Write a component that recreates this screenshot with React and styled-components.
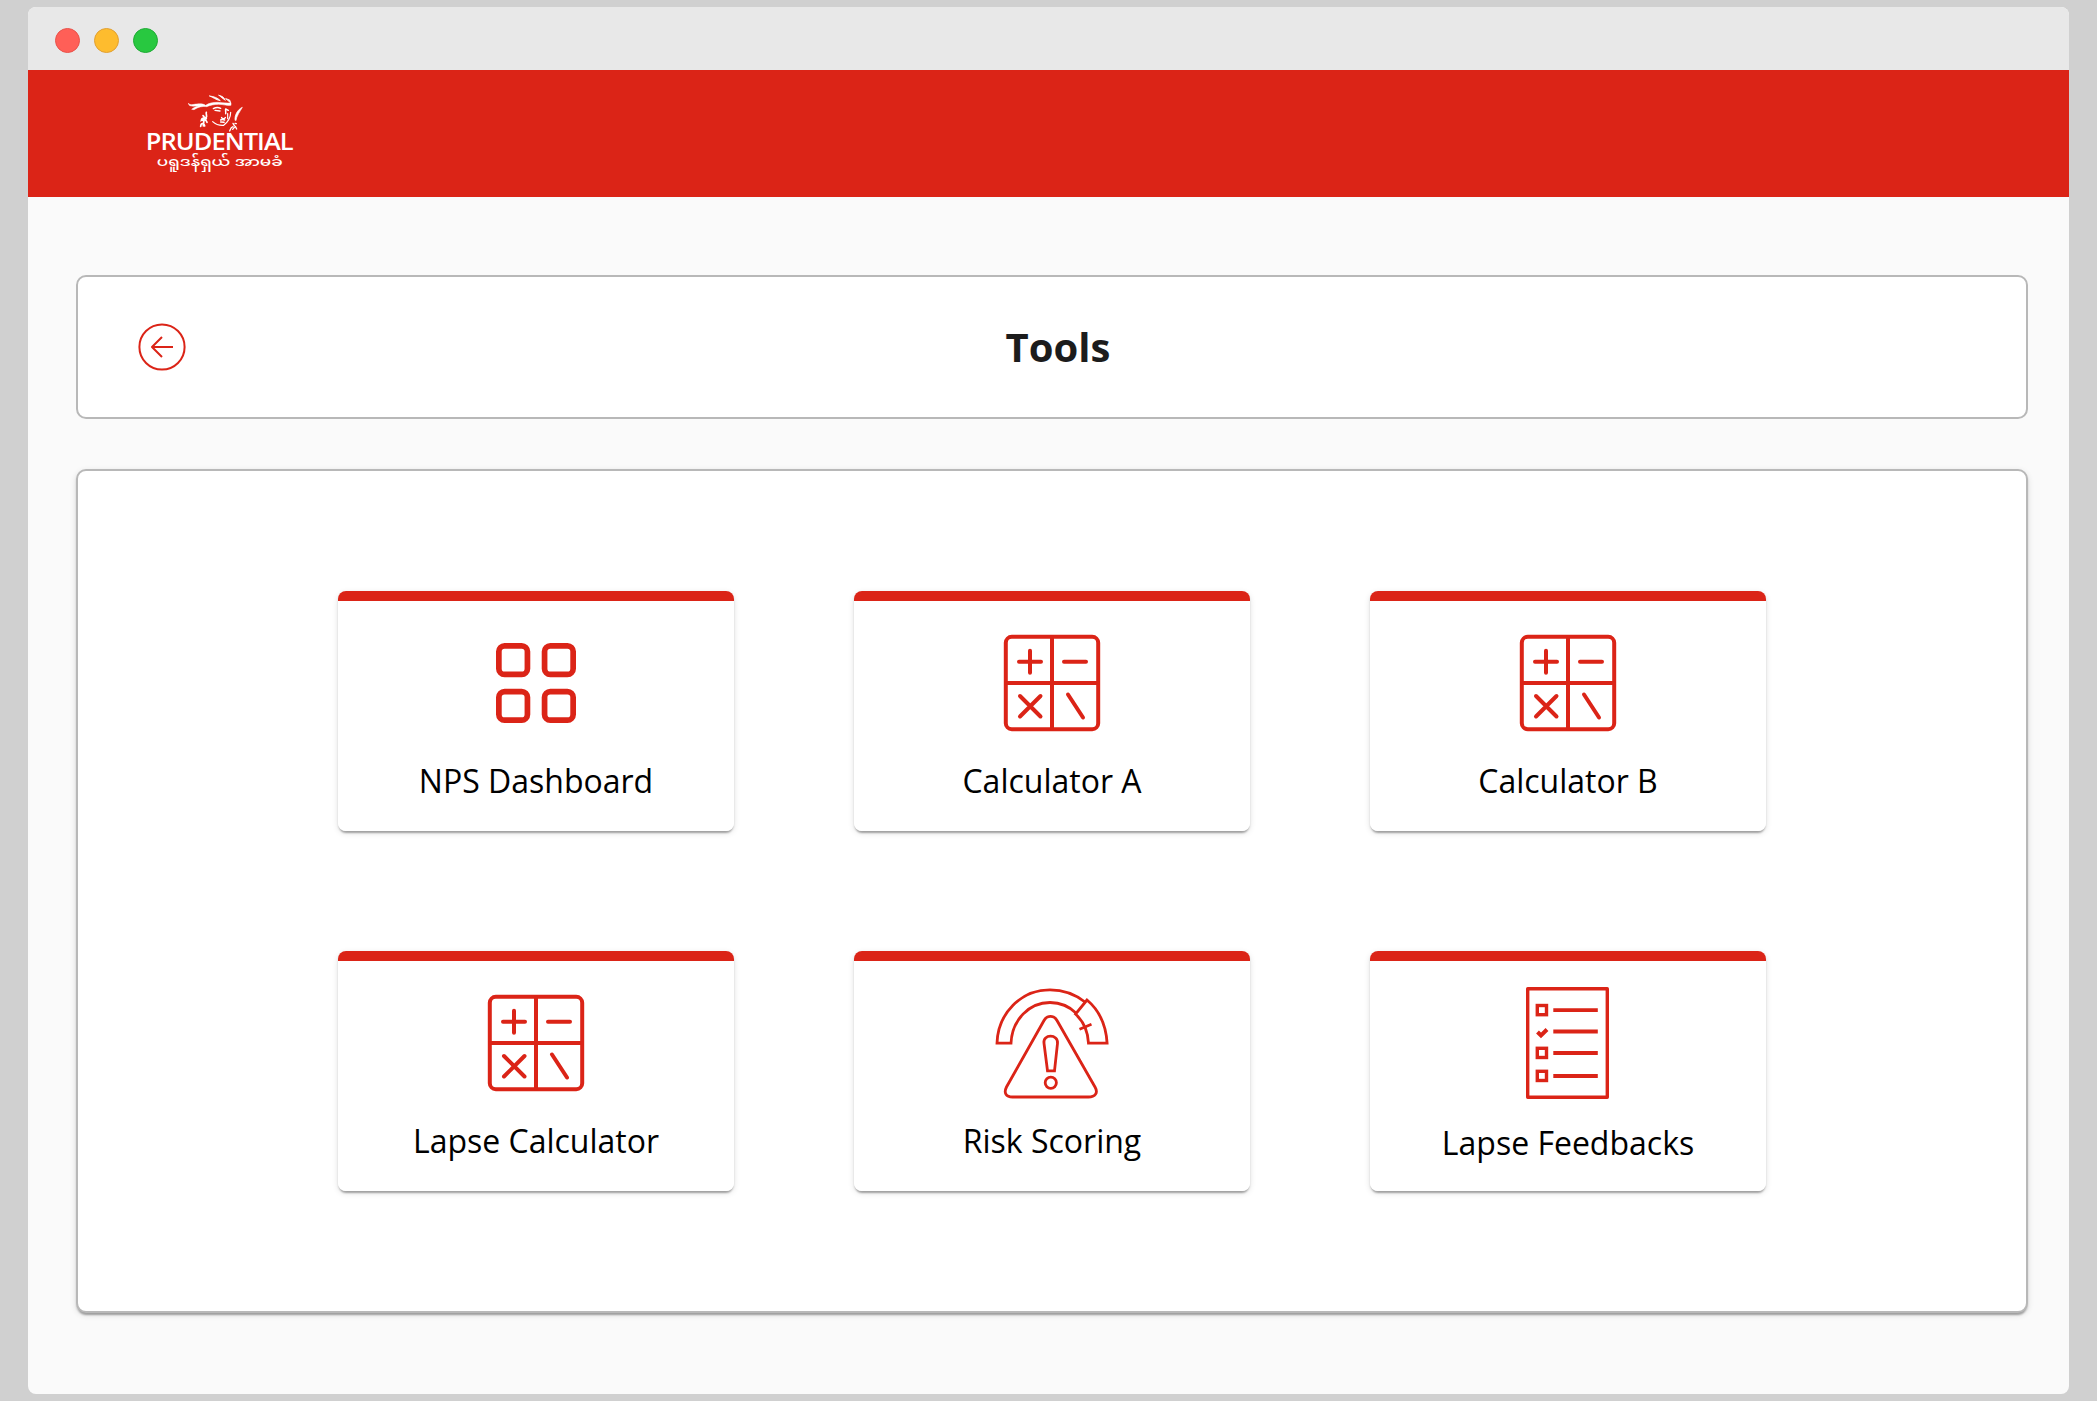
import React from "react";
import styled, { createGlobalStyle } from "styled-components";

const RED = "#db2417";

const GlobalStyle = createGlobalStyle`
  * { box-sizing: border-box; }
  body {
    margin: 0;
    background: #d0d0d0;
    font-family: "Open Sans", "Noto Sans", sans-serif;
  }
`;

const Desktop = styled.div`
  height: 1401px;
  padding: 7px 28px;
`;

const Window = styled.div`
  height: 1387px;
  border-radius: 8px;
  overflow: hidden;
  background: #fafafa;
`;

const TitleBar = styled.div`
  display: flex;
  align-items: center;
  gap: 14px;
  height: 63px;
  padding: 4px 0 0 27px;
  background: #e8e8e8;
`;

const Light = styled.span`
  width: 25px;
  height: 25px;
  border-radius: 50%;
  background: ${(p) => p.$fill};
  border: 1px solid ${(p) => p.$edge};
`;

const Header = styled.header`
  display: flex;
  height: 127px;
  padding: 24px 0 0 118px;
  background: ${RED};
`;

const Logo = styled.div`
  display: flex;
  flex-direction: column;
  align-items: center;
  width: 148px;
  color: #fff;
  svg { margin-right: 8px; }
`;

const Wordmark = styled.span`
  height: 21px;
  margin-right: 2px;
  line-height: 18px;
  font-family: "Open Sans", sans-serif;
  font-size: 24px;
  font-weight: 600;
  letter-spacing: -0.9px;
  white-space: nowrap;
  transform: scaleX(1.06);
`;

const Tagline = styled.span`
  height: 20px;
  line-height: 20px;
  font-family: "Noto Sans Myanmar", "Noto Sans", sans-serif;
  font-size: 13px;
  font-weight: 500;
  white-space: nowrap;
  transform: scaleX(1.29);
`;

const Content = styled.main`
  display: flex;
  flex-direction: column;
  gap: 50px;
  padding: 78px 41px 0 48px;
`;

const TitleCard = styled.section`
  display: grid;
  grid-template-columns: 48px 1fr 48px;
  align-items: center;
  height: 144px;
  padding: 0 48px 0 60px;
  background: #fff;
  border: 2px solid #b8b8b8;
  border-radius: 10px;
`;

const BackButton = styled.button`
  display: flex;
  padding: 0;
  border: 0;
  background: none;
`;

const Title = styled.h1`
  margin: 0;
  text-align: center;
  font-size: 40px;
  line-height: 56px;
  font-weight: 700;
  color: #1c1c1c;
`;

const Panel = styled.section`
  display: grid;
  grid-template-columns: repeat(3, 396px);
  grid-auto-rows: 240px;
  gap: 120px;
  justify-content: center;
  align-content: start;
  height: 844px;
  padding-top: 120px;
  background: #fff;
  border: 2px solid #b8b8b8;
  border-radius: 10px;
  box-shadow: 0 4px 2px -2px rgba(0, 0, 0, 0.2), 0 2px 2px rgba(0, 0, 0, 0.14),
    0 2px 6px rgba(0, 0, 0, 0.12);
`;

const Card = styled.article`
  display: flex;
  flex-direction: column;
  align-items: center;
  overflow: hidden;
  background: linear-gradient(${RED} 10px, #fff 10px);
  padding-top: 36px;
  border-radius: 8px;
  box-shadow: 0 4px 2px -2px rgba(0, 0, 0, 0.2), 0 2px 2px rgba(0, 0, 0, 0.14),
    0 2px 6px rgba(0, 0, 0, 0.12);
`;

const IconSlot = styled.div`
  display: flex;
  align-items: center;
  justify-content: center;
  height: 112px;
  margin-bottom: ${(p) => p.$gap}px;
  padding-right: ${(p) => p.$nudge}px;
  svg { overflow: visible; }
`;

const Label = styled.span`
  font-size: 32px;
  line-height: 44px;
  color: #000;
`;

const BackIcon = () => (
  <svg width="48" height="48" viewBox="0 0 48 48" fill="none" stroke={RED} strokeWidth="2">
    <circle cx="24" cy="24" r="22.6" />
    <path d="M35 24H14M24 14L14 24l10 10" strokeLinejoin="round" />
  </svg>
);

const GridIcon = () => (
  <svg width="80" height="80" viewBox="0 0 14 14" fill="none" stroke={RED}>
    <rect x=".5" y=".5" width="5" height="5" rx="1" />
    <rect x="8.5" y=".5" width="5" height="5" rx="1" />
    <rect x=".5" y="8.5" width="5" height="5" rx="1" />
    <rect x="8.5" y="8.5" width="5" height="5" rx="1" />
  </svg>
);

const CalculatorIcon = () => (
  <svg width="96" height="96" viewBox="0 0 96 96" fill="none" stroke={RED} strokeWidth="4" strokeLinecap="round">
    <rect x="1.8" y="1.8" width="92.4" height="92.4" rx="6" />
    <path d="M48 2v92M2 48h92" />
    <path d="M15 26.7h22M26 15.7v22M60 26.7h22M16 61l20.500 20.500M36.500 61L16 81.500M64 59.500l15 23" />
  </svg>
);

const RiskIcon = () => (
  <svg width="113" height="112" viewBox="0 0 113 112" fill="none" stroke={RED} strokeWidth="2.8">
    <path d="M90 15C80 7 68 2.800 55 2.800C26 2.800 3 26 2 56.200h14C17 33 34 15.500 55 15.500C64.500 15.500 74 19 81.500 26.500" />
    <path d="M92 13L80.500 27C88 34 93 44 93.500 56.200h18.600C111 38 104.500 23.500 92 13z" />
    <path d="M84.500 42.200l12-5" />
    <path d="M49 33.500C52 28 59 28 62 33.500L100 100C103.500 106 100 110 93.500 110H17.500C11 110 8.500 106 11.500 100z" />
    <path d="M52.500 83.800L49 56.300C47.500 46.800 63.500 46.800 62.500 56.300L59.500 83.800z" />
    <circle cx="55.800" cy="95.700" r="5.600" />
  </svg>
);

const FeedbackIcon = () => (
  <svg width="83" height="112" viewBox="0 0 83 112" fill="none" stroke={RED} strokeWidth="3.400">
    <rect x="1.700" y="1.700" width="79.600" height="108.600" strokeLinejoin="round" />
    <rect x="11.300" y="18.500" width="9.200" height="9.200" />
    <rect x="11.300" y="61.300" width="9.200" height="9.200" />
    <rect x="11.300" y="84.300" width="9.200" height="9.200" />
    <path d="M11.500 45l3.500 3.500 6-6" strokeWidth="4" />
    <path d="M27.300 23.200h44.500M27.300 44.500h44.500M27.300 66h44.500M27.300 89h44.500" strokeWidth="3.800" />
  </svg>
);

const HeadMark = () => (
  <svg width="56" height="38" viewBox="174 40 168 114" fill="none" stroke="#fff" strokeLinecap="round">
    <path fill="#fff" strokeWidth="1.500" d="M175 68c6 8 16 2 26 2 9-1 19-1 26 4 10-7 21-9 35-9 14 1 27 3 41 2l0 7c-11 2-23-3-37-3-14 0-26 3-36 7-14-2-24 1-38 9l-7-1c6-5 11-8 20-10-12 0-21 2-27-2z" />
    <path fill="#fff" strokeWidth="2.500" d="M239 46c11 4 18 12 32 14-9-9-18-12-32-14zM267 44c6 5 13 11 19 15-3-8-9-13-19-15zM288 54l11 4 3 8z" />
    <path strokeWidth="4" d="M250 84c7-4 16-4 22-1M255 89l15 2" />
    <path strokeWidth="4.500" d="M287 85c-1 5 1 10 0 14M287 85l8 4M275 111c4 5 8 4 11 0M272 118c5-3 9 0 12 0M272 124l10 1" />
    <path strokeWidth="3.500" d="M302 95c0 15-8 29-21 39-13 1-23-2-33-11M293 99v15" />
    <path strokeWidth="5" d="M229 95c-2 7 3 10 0 15-9 3-14 1-15 9 7-5 15-1 17 6M219 105c8 2 1 19 1 31M212 137c1-11 10-10 12-1M218 119l11-5" />
    <path fill="#fff" strokeWidth="2" d="M315 118c-2-14 8-32 22-38-8 14-17 25-19 39z" />
    <path strokeWidth="4" d="M309 128l4 7M309 138c-7 2-8 8-10 13M315 128l4 1M316 137l4 8M308 146l5-6" />
  </svg>
);

const tools = [
  { name: "NPS Dashboard", Icon: GridIcon },
  { name: "Calculator A", Icon: CalculatorIcon },
  { name: "Calculator B", Icon: CalculatorIcon },
  { name: "Lapse Calculator", Icon: CalculatorIcon },
  { name: "Risk Scoring", Icon: RiskIcon, nudge: 2 },
  { name: "Lapse Feedbacks", Icon: FeedbackIcon, nudge: 2, gap: 22 },
];

export default function App() {
  return (
    <Desktop>
      <GlobalStyle />
      <Window>
        <TitleBar>
          <Light $fill="#ff5f57" $edge="#e9524a" />
          <Light $fill="#febc2e" $edge="#e1a032" />
          <Light $fill="#28c840" $edge="#1fab35" />
        </TitleBar>
        <Header>
          <Logo>
            <HeadMark />
            <Wordmark>PRUDENTIAL</Wordmark>
            <Tagline lang="my">ပရူဒန်ရှယ် အာမခံ</Tagline>
          </Logo>
        </Header>
        <Content>
          <TitleCard>
            <BackButton aria-label="Back">
              <BackIcon />
            </BackButton>
            <Title>Tools</Title>
          </TitleCard>
          <Panel>
            {tools.map(({ name, Icon, gap = 20, nudge = 0 }) => (
              <Card key={name}>
                <IconSlot $gap={gap} $nudge={nudge}>
                  <Icon />
                </IconSlot>
                <Label>{name}</Label>
              </Card>
            ))}
          </Panel>
        </Content>
      </Window>
    </Desktop>
  );
}
